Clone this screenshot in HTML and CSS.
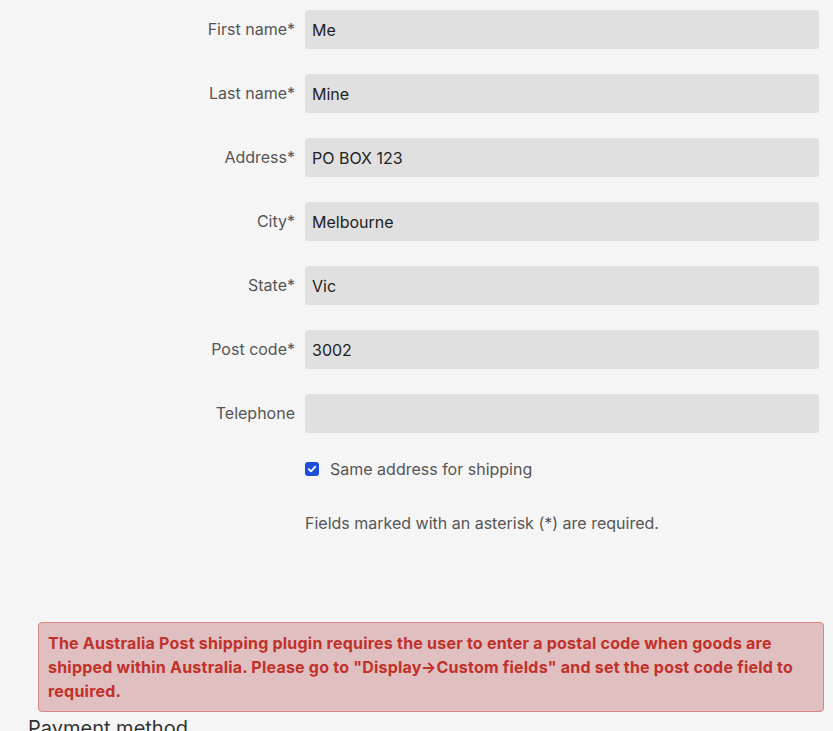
FILE: index.html
```html
<!DOCTYPE html>
<html>
<head>
<meta charset="utf-8">
<link rel="stylesheet" href="styles.css">
</head>
<body>
<div class="page">
  <form class="form">
    <label class="lbl">First name*</label><div class="inp">Me</div>
    <label class="lbl">Last name*</label><div class="inp">Mine</div>
    <label class="lbl">Address*</label><div class="inp">PO BOX 123</div>
    <label class="lbl">City*</label><div class="inp">Melbourne</div>
    <label class="lbl">State*</label><div class="inp">Vic</div>
    <label class="lbl">Post code*</label><div class="inp">3002</div>
    <label class="lbl">Telephone</label><div class="inp"></div>
    <div></div>
    <div class="check">
      <span class="box"><svg width="10" height="10" viewBox="0 0 10 10"><path d="M1.8 5.2 L4 7.3 L8.3 2.6" fill="none" stroke="#fff" stroke-width="1.8" stroke-linecap="round" stroke-linejoin="round"/></svg></span>
      <span>Same address for shipping</span>
    </div>
    <div></div>
    <div class="note">Fields marked with an asterisk (*) are required.</div>
  </form>
  <div class="alert">The Australia Post shipping plugin requires the user to enter a postal code when goods are shipped within Australia. Please go to "Display→Custom fields" and set the post code field to required.</div>
  <h2 class="heading">Payment method</h2>
</div>
</body>
</html>
```
FILE: styles.css
```css
html, body {
  margin: 0;
  padding: 0;
  background: #f5f5f5;
}
body {
  font-family: Inter, "Noto Sans", sans-serif;
  color: #333;
}
.page {
  padding: 10px 14px 0 0;
}
.form {
  display: grid;
  grid-template-columns: 295px 1fr;
  column-gap: 10px;
  row-gap: 25px;
  align-items: center;
}
.lbl {
  text-align: right;
  font-size: 16px;
  color: #555;
  margin-top: -1px;
}
.inp {
  height: 39px;
  box-sizing: border-box;
  background: #e0e0e0;
  border-radius: 3px;
  padding: 0 7px;
  display: flex;
  align-items: center;
  font-size: 16px;
  color: #222;
}
.check {
  display: flex;
  align-items: center;
  gap: 11px;
  font-size: 16px;
  color: #555;
  margin-top: 1px;
}
.box {
  width: 14px;
  height: 14px;
  border-radius: 3px;
  background: #1d4ed8;
  display: flex;
  align-items: center;
  justify-content: center;
}
.note {
  font-size: 16px;
  color: #555;
  margin-top: 9px;
}
.alert {
  margin: 89px 0 0 38px;
  margin-right: -5px;
  background: #dfbfc0;
  border: 1px solid #d88585;
  border-radius: 4px;
  padding: 8px 9px 8px 9px;
  color: #c2302a;
  font-weight: 700;
  font-size: 16px;
  line-height: 24px;
  letter-spacing: 0.22px;
}
.heading {
  margin: 4px 0 0 28px;
  font-weight: 400;
  font-size: 20px;
  color: #333;
}
```
